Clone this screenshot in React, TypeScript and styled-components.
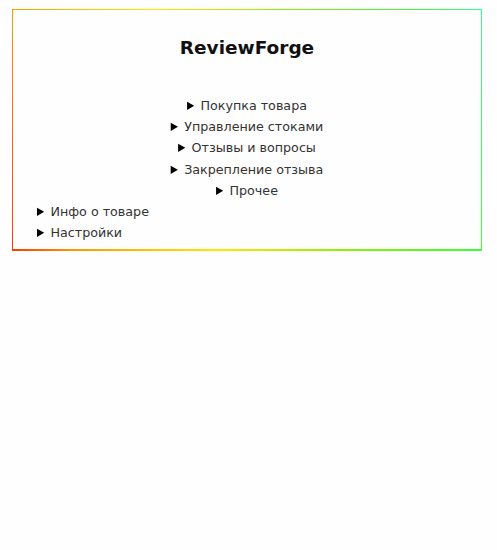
import React from "react";
import styled, { createGlobalStyle } from "styled-components";

const Global = createGlobalStyle`
  html, body { margin: 0; padding: 0; background: #fefefe; }
  body { font-family: "DejaVu Sans", "Open Sans", sans-serif; }
`;

const Frame = styled.div`
  box-sizing: border-box;
  width: 470px;
  margin: 9px 0 0 12px;
  border-style: solid;
  border-width: 1px 1px 2px 1px;
  border-image: linear-gradient(75deg, #ff3a00 0%, #ff9a00 12%, #ffe800 38%, #8cf200 62%, #3cff30 86%, #30ff9c 100%) 1;
  padding: 20px 0 6px;
  background: #fefefe;
`;

const Title = styled.h1`
  margin: 0 0 29px;
  font-size: 18.5px;
  line-height: 36px;
  font-weight: 700;
  text-align: center;
  color: #111;
`;

const Section = styled.details<{ $align: "center" | "left" }>`
  font-size: 12.7px;
  line-height: 21.2px;
  color: #333;
  text-align: ${(p) => p.$align};
  padding-left: ${(p) => (p.$align === "left" ? "24px" : "0")};
`;

const Summary = styled.summary`
  cursor: pointer;
  &::marker { color: #000; }
`;

const items: { label: string; align: "center" | "left" }[] = [
  { label: "Покупка товара", align: "center" },
  { label: "Управление стоками", align: "center" },
  { label: "Отзывы и вопросы", align: "center" },
  { label: "Закрепление отзыва", align: "center" },
  { label: "Прочее", align: "center" },
  { label: "Инфо о товаре", align: "left" },
  { label: "Настройки", align: "left" },
];

export default function App() {
  return (
    <>
      <Global />
      <Frame>
        <Title>ReviewForge</Title>
        {items.map((it) => (
          <Section key={it.label} $align={it.align}>
            <Summary>{it.label}</Summary>
          </Section>
        ))}
      </Frame>
    </>
  );
}
